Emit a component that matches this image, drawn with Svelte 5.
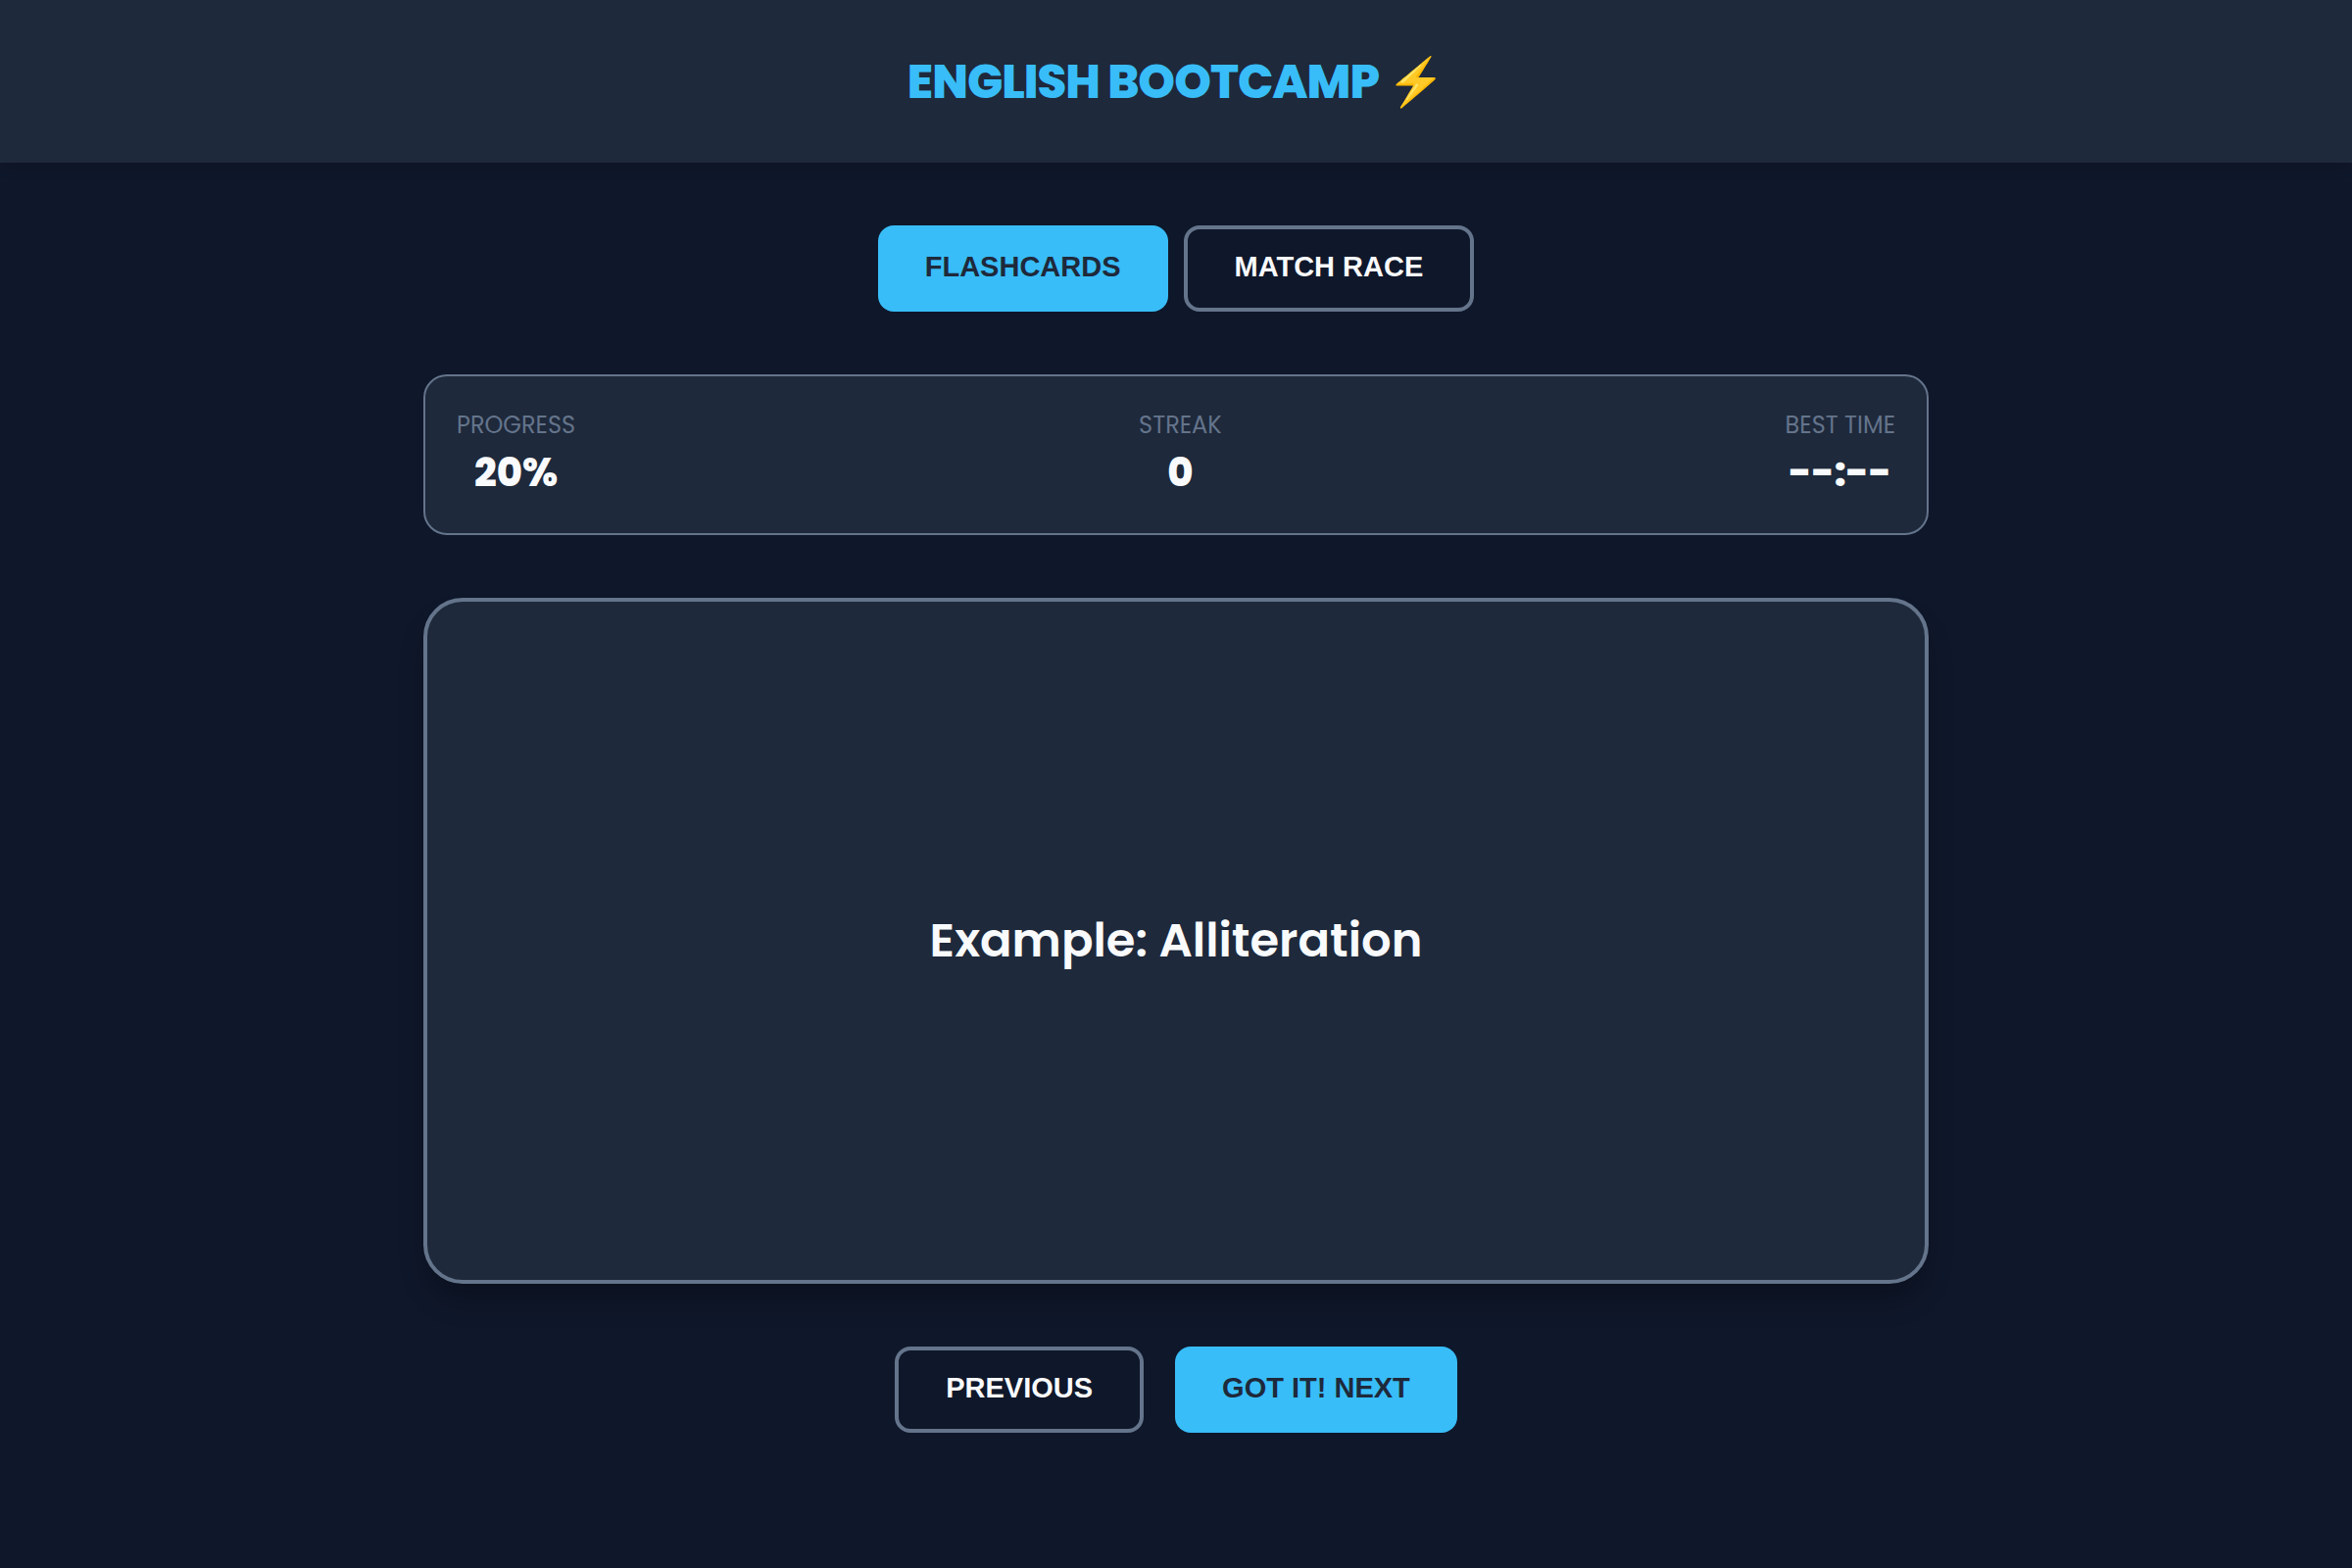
<script lang="ts">

    type Mode = 'flashcards' | 'match'

    const cards = [
        'Example: Alliteration',
        'Example: Metaphor',
        'Example: Simile',
        'Example: Hyperbole',
        'Example: Irony'
    ]

    let mode = $state<Mode>('flashcards')
    let index = $state(0)
    let streak = $state(0)
    let progress = $derived(Math.round(((index + 1) / cards.length) * 100))

    function next() {
        index = (index + 1) % cards.length
        streak += 1
    }

    function previous() {
        index = (index - 1 + cards.length) % cards.length
    }

</script>


<header>
    <h1>ENGLISH BOOTCAMP ⚡</h1>
</header>

<main>
    <nav class="tabs">
        <button class:active={mode === 'flashcards'} onclick={() => (mode = 'flashcards')}>FLASHCARDS</button>
        <button class:active={mode === 'match'} onclick={() => (mode = 'match')}>MATCH RACE</button>
    </nav>

    <section class="stats">
        <div class="stat">
            <span class="label">PROGRESS</span>
            <span class="value">{progress}%</span>
        </div>
        <div class="stat">
            <span class="label">STREAK</span>
            <span class="value">{streak}</span>
        </div>
        <div class="stat">
            <span class="label">BEST TIME</span>
            <span class="value">--:--</span>
        </div>
    </section>

    <section class="card">
        <p>{cards[index]}</p>
    </section>

    <div class="controls">
        <button onclick={previous}>PREVIOUS</button>
        <button class="active" onclick={next}>GOT IT! NEXT</button>
    </div>
</main>


<style>

    :global(body) {
        background: #0f172a;
        color: #f8fafc;
        font-family: Poppins, Inter, sans-serif;
    }

    header {
        padding: 48px 48px 46px;
        text-align: center;
        background: #1e293b;
        box-shadow: 0 8px 12px -2px rgba(0, 0, 0, 0.1);
    }

    h1 {
        margin: 0;
        color: #38bdf8;
        font-size: 48px;
        font-weight: 800;
        line-height: 72px;
        letter-spacing: -1px;
    }

    main {
        display: flex;
        flex-direction: column;
        gap: 64px;
        max-width: 1600px;
        margin: 0 auto;
        padding: 64px 32px;
        box-sizing: border-box;
    }

    .tabs,
    .controls {
        display: flex;
        justify-content: center;
        gap: 16px;
    }

    .controls {
        gap: 32px;
    }

    button {
        padding: 24px 48px 28px;
        border: 4px solid #64748b;
        border-radius: 16px;
        background: transparent;
        color: #f8fafc;
        font-family: "Liberation Sans", Arial, sans-serif;
        font-size: 29px;
        font-weight: 700;
        line-height: 28px;
        cursor: pointer;
    }

    button.active {
        border: none;
        background: #38bdf8;
        color: #1e293b;
    }

    .stats {
        display: flex;
        justify-content: space-between;
        padding: 32px;
        border: 2px solid #64748b;
        border-radius: 24px;
        background: #1e293b;
    }

    .stat {
        display: flex;
        flex-direction: column;
        align-items: center;
    }

    .label {
        color: #64748b;
        font-size: 24px;
        font-weight: 400;
        line-height: 36px;
    }

    .value {
        font-size: 40px;
        font-weight: 800;
        line-height: 60px;
    }

    .card {
        display: flex;
        align-items: center;
        justify-content: center;
        min-height: 700px;
        box-sizing: border-box;
        border: 4px solid #64748b;
        border-radius: 40px;
        background: #1e293b;
        box-shadow: 0 20px 30px -6px rgba(0, 0, 0, 0.3);
    }

    .card p {
        margin: 0;
        font-size: 48px;
        font-weight: 600;
        line-height: 72px;
    }

</style>
